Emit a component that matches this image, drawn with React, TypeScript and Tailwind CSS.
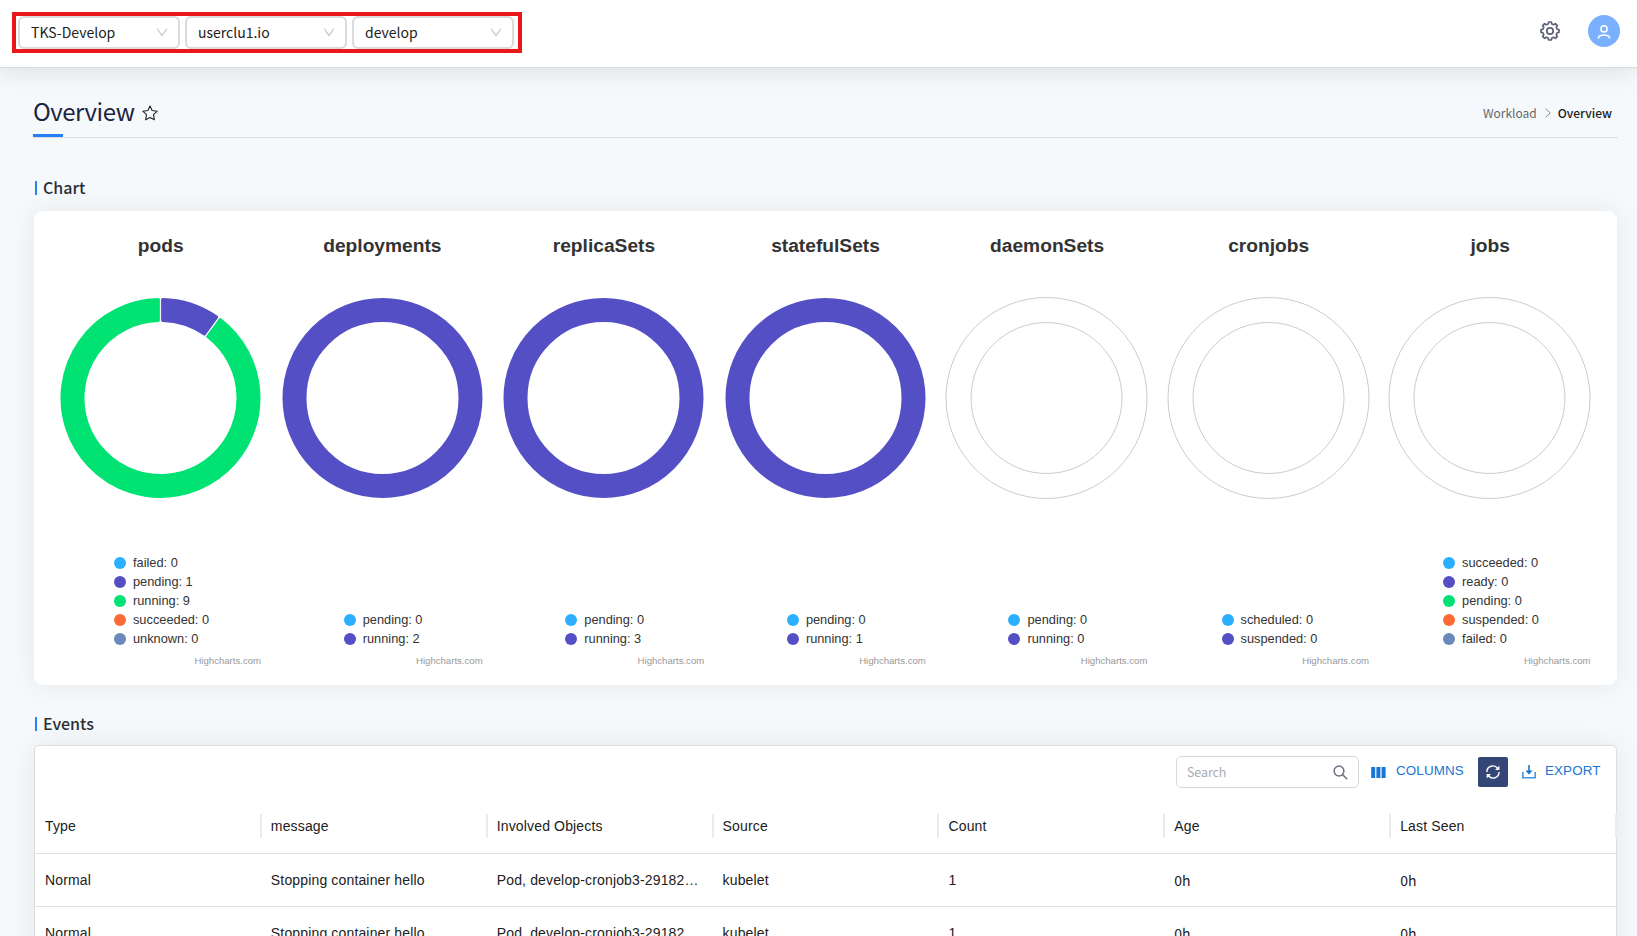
import React from "react";

const KR = "font-['Noto_Sans_CJK_KR',sans-serif]";
const ARIAL = "font-['Liberation_Sans',Arial,sans-serif]";

const DOTS = ["bg-[#2caffe]", "bg-[#544fc5]", "bg-[#00e272]", "bg-[#fe6a35]", "bg-[#6b8abc]"];
const FILLS = ["#2caffe", "#544fc5", "#00e272", "#fe6a35", "#6b8abc"];

type Entry = [string, number];
const charts: { title: string; data: Entry[] }[] = [
  { title: "pods", data: [["failed", 0], ["pending", 1], ["running", 9], ["succeeded", 0], ["unknown", 0]] },
  { title: "deployments", data: [["pending", 0], ["running", 2]] },
  { title: "replicaSets", data: [["pending", 0], ["running", 3]] },
  { title: "statefulSets", data: [["pending", 0], ["running", 1]] },
  { title: "daemonSets", data: [["pending", 0], ["running", 0]] },
  { title: "cronjobs", data: [["scheduled", 0], ["suspended", 0]] },
  { title: "jobs", data: [["succeeded", 0], ["ready", 0], ["pending", 0], ["suspended", 0], ["failed", 0]] },
];

const CX = 110.5;
const CY = 102;
const R = 100;
const r = 76;

function point(radius: number, turn: number) {
  const a = turn * 2 * Math.PI - Math.PI / 2;
  return `${(CX + radius * Math.cos(a)).toFixed(2)} ${(CY + radius * Math.sin(a)).toFixed(2)}`;
}

function Donut({ data }: { data: Entry[] }) {
  const total = data.reduce((s, [, v]) => s + v, 0);
  const used = data.filter(([, v]) => v > 0);
  let body: React.ReactNode;
  if (total === 0) {
    body = (
      <g fill="none" stroke="#cccccc" strokeWidth="1">
        <circle cx={CX} cy={CY} r={100.5} />
        <circle cx={CX} cy={CY} r={75.5} />
      </g>
    );
  } else if (used.length === 1) {
    const index = data.findIndex(([, v]) => v > 0);
    body = <circle cx={CX} cy={CY} r={88} fill="none" stroke={FILLS[index]} strokeWidth="24" />;
  } else {
    let from = 0;
    body = data.map(([name, v], i) => {
      if (!v) return null;
      const start = from / total;
      from += v;
      const end = from / total;
      const large = end - start > 0.5 ? 1 : 0;
      const outer = R - 1.5;
      const inner = r + 1.5;
      const gapO = 2.1 / (2 * Math.PI * outer);
      const gapI = 2.1 / (2 * Math.PI * inner);
      const d = `M ${point(outer, start + gapO)} A ${outer} ${outer} 0 ${large} 1 ${point(outer, end - gapO)} L ${point(inner, end - gapI)} A ${inner} ${inner} 0 ${large} 0 ${point(inner, start + gapI)} Z`;
      return <path key={name} d={d} fill={FILLS[i]} stroke={FILLS[i]} strokeWidth="3" strokeLinejoin="round" />;
    });
  }
  return (
    <svg width="221" height="204" viewBox="0 0 221 204" className="mt-[39px] shrink-0 self-start">
      {body}
    </svg>
  );
}

function gearPath() {
  const parts: string[] = [];
  for (let i = 0; i < 8; i++) {
    const base = i * 45;
    for (const [radius, offset] of [[7.3, -14], [9.1, -8.5], [9.1, 8.5], [7.3, 14]]) {
      const a = ((base + offset) * Math.PI) / 180;
      parts.push(`${(10 + radius * Math.cos(a)).toFixed(2)} ${(10 + radius * Math.sin(a)).toFixed(2)}`);
    }
  }
  return `M ${parts.join(" L ")} Z`;
}

function Select({ label }: { label: string }) {
  return (
    <div className="flex h-[33px] w-[162px] shrink-0 items-center justify-between rounded-[6px] border-2 border-[#dbdbdb] pr-[10px] pb-[2px] pl-[11px]">
      <span className={`${KR} text-[14px] leading-[20px] text-[#222]`}>{label}</span>
      <svg width="12" height="10" viewBox="0 0 12 10" fill="none" stroke="#bfbfbf" strokeWidth="1.1">
        <path d="M1.2 1.7 L6 8.5 L10.8 1.7" />
      </svg>
    </div>
  );
}

function SectionTitle({ children }: { children: string }) {
  return (
    <h2 className="flex items-center gap-[6px]">
      <span className="h-[14px] w-[2px] bg-[#2680f3]" />
      <span className={`${KR} mt-[-1px] mb-[1px] text-[16px] leading-[24px] font-medium text-[#2b2f36]`}>{children}</span>
    </h2>
  );
}

const headers = ["Type", "message", "Involved Objects", "Source", "Count", "Age", "Last Seen"];
const row = ["Normal", "Stopping container hello", "Pod, develop-cronjob3-29182…", "kubelet", "1"];
const times = ["0h", "0h"];

export default function App() {
  return (
    <div className="flex h-[936px] w-[1637px] flex-col overflow-hidden bg-[#f5f9fc]">
      <header className="z-10 flex h-[68px] shrink-0 items-start justify-between border-b border-[#d8dadd] bg-white pr-[17px] pl-[12px] shadow-[0_4px_24px_rgba(0,0,0,0.1)]">
        <div className="mt-[12px] flex h-[41px] w-[510px] items-start gap-[5px] border-4 border-[#e9191b] pl-[2px]">
          <Select label="TKS-Develop" />
          <Select label="userclu1.io" />
          <Select label="develop" />
        </div>
        <div className="mt-[15px] flex items-center gap-[28px]">
          <svg width="20" height="20" viewBox="0 0 20 20" fill="none" stroke="#5d6078" strokeWidth="1.7" strokeLinejoin="round">
            <path d={gearPath()} />
            <circle cx="10" cy="10" r="3.2" />
          </svg>
          <div className="flex size-8 items-center justify-center rounded-full bg-[#7ab0ff]">
            <svg width="16" height="16" viewBox="0 0 16 16" fill="none" stroke="#fff" strokeWidth="1.5">
              <circle cx="8" cy="5.9" r="3.1" />
              <path d="M2.2 15.6 C2.8 12.4 4.9 12 8 12 C11.1 12 13.2 12.4 13.8 15.6" />
            </svg>
          </div>
        </div>
      </header>

      <main className="flex flex-col pr-[20px] pl-[33px]">
        <div className="mr-[-1px] flex h-[70px] w-[1585px] items-start justify-between border-b border-[#d9dde1] pt-[25px] pr-[6px]">
          <div className="flex flex-col">
            <div className="flex items-center">
              <h1 className={`${KR} text-[24px] leading-[36px] tracking-[-0.48px] text-[#1b2440]`}>Overview</h1>
              <svg width="16" height="16" viewBox="0 0 16 16" fill="none" stroke="#222" strokeWidth="1.1" strokeLinejoin="round" className="mt-[3px] ml-[8px]">
                <path d="M8 1 L10.1 5.5 L15.2 6.2 L11.5 9.7 L12.4 14.8 L8 12.4 L3.6 14.8 L4.5 9.7 L0.8 6.2 L5.9 5.5 Z" />
              </svg>
            </div>
            <span className="mt-[5px] h-[3px] w-[30px] bg-[#2680f3]" />
          </div>
          <div className={`${KR} mt-[10px] flex items-center text-[12px] leading-[20px]`}>
            <span className="text-[#63666b]">Workload</span>
            <svg width="6" height="10" viewBox="0 0 6 10" fill="none" stroke="#85888c" strokeWidth="1" className="mr-[7px] ml-[8px]">
              <path d="M0.7 0.5 L5.2 5 L0.7 9.5" />
            </svg>
            <span className="font-medium text-[#1c1c1c]">Overview</span>
          </div>
        </div>

        <div className="mt-[38px] ml-[2px]">
          <SectionTitle>Chart</SectionTitle>
        </div>

        <section className={`${ARIAL} mt-[11px] ml-[1px] flex h-[474px] w-[1583px] rounded-[9px] bg-white px-[16px] shadow-[0_0_28px_rgba(0,0,0,0.07)]`}>
          {charts.map((chart) => (
            <div key={chart.title} className="flex h-full flex-1 flex-col items-center">
              <h3 className="mt-[24px] text-[19.2px] leading-[22px] font-bold text-[#333]">{chart.title}</h3>
              <Donut data={chart.data} />
              <div className="mb-[6px] ml-[1.5px] flex flex-1 flex-col justify-end">
                {chart.data.map(([name, value], i) => (
                  <div key={name} className="flex h-[19px] items-center gap-[7px]">
                    <span className={`size-3 rounded-full ${DOTS[i]}`} />
                    <span className="pt-[1px] text-[12.8px] leading-[18px] text-[#333]">{`${name}: ${value}`}</span>
                  </div>
                ))}
              </div>
              <div className="mr-[10.5px] mb-[17px] self-end text-[9.6px] leading-[14px] text-[#999]">Highcharts.com</div>
            </div>
          ))}
        </section>

        <div className="mt-[27px] ml-[2px]">
          <SectionTitle>Events</SectionTitle>
        </div>

        <section className={`${ARIAL} mt-[9px] ml-[1px] flex h-[240px] w-[1583px] flex-col rounded-[5px] border border-[#dcdddf] bg-white shadow-[0_0_28px_rgba(0,0,0,0.07)]`}>
          <div className="flex h-[53px] items-center justify-end pr-[15px] pb-[1px]">
            <div className="flex h-8 w-[183px] shrink-0 items-center justify-between rounded-[5px] border border-[#d9d9d9] px-[10px]">
              <span className={`${KR} text-[12.5px] tracking-[-0.1px] text-[#a9abb0]`}>Search</span>
              <svg width="15" height="15" viewBox="0 0 15 15" fill="none" stroke="#6e7183" strokeWidth="1.5">
                <circle cx="6" cy="6" r="4.9" />
                <path d="M9.6 9.6 L14.2 14.2" />
              </svg>
            </div>
            <svg width="15" height="11" viewBox="0 0 15 11" fill="#1976d2" className="ml-[12px]">
              <rect x="0.2" width="4" height="11" />
              <rect x="5.4" width="4" height="11" />
              <rect x="10.6" width="4" height="11" />
            </svg>
            <span className="ml-[10px] w-[82px] pb-[1px] text-[13.4px] tracking-[0.12px] text-[#1976d2]">COLUMNS</span>
            <div className="flex size-[30px] items-center justify-center rounded-[2px] bg-[#344675]">
              <svg width="14" height="14" viewBox="0 0 14 14" fill="none" stroke="#fff" strokeWidth="1.4">
                <path d="M0.9 7 A6 6 0 0 1 11.6 3.2" />
                <path d="M13.1 7 A6 6 0 0 1 2.4 10.8" />
                <path d="M13.4 0.6 V5 H9 Z" fill="#fff" stroke="none" />
                <path d="M0.6 13.4 V9 H5 Z" fill="#fff" stroke="none" />
              </svg>
            </div>
            <svg width="14" height="14" viewBox="0 0 14 14" fill="none" stroke="#1976d2" strokeWidth="1.6" className="ml-[14px]">
              <path d="M0.8 7 V12.8 H13.2 V7" stroke="#4a93df" />
              <path d="M7 0 V8.4" />
              <path d="M3.4 5.4 H10.6 L7 9.6 Z" fill="#1976d2" stroke="none" />
            </svg>
            <span className="ml-[9px] w-[56px] pb-[1px] text-[13.4px] tracking-[0.12px] text-[#1976d2]">EXPORT</span>
          </div>
          <div className="flex h-[55px] items-center border-b border-[#e0e0e0]">
            {headers.map((h) => (
              <div key={h} className="flex h-6 flex-1 items-center justify-between pl-[10px] text-[14px] tracking-[0.15px] text-[#212121]">
                <span>{h}</span>
                <span className="mr-[-1px] h-6 w-[2px] bg-[#ebebeb]" />
              </div>
            ))}
          </div>
          {[0, 1].map((n) => (
            <div key={n} className="flex h-[53px] items-center border-b border-[#e0e0e0]">
              {row.map((cell) => (
                <div key={cell} className="w-0 flex-1 pl-[10px] text-[14px] tracking-[0.15px] whitespace-nowrap text-[#212121]">
                  {cell}
                </div>
              ))}
              {times.map((cell, i) => (
                <div key={i} className={`${KR} w-0 flex-1 pl-[10px] text-[14px] leading-[20px] text-[#212121]`}>
                  {cell}
                </div>
              ))}
            </div>
          ))}
        </section>
      </main>
    </div>
  );
}
